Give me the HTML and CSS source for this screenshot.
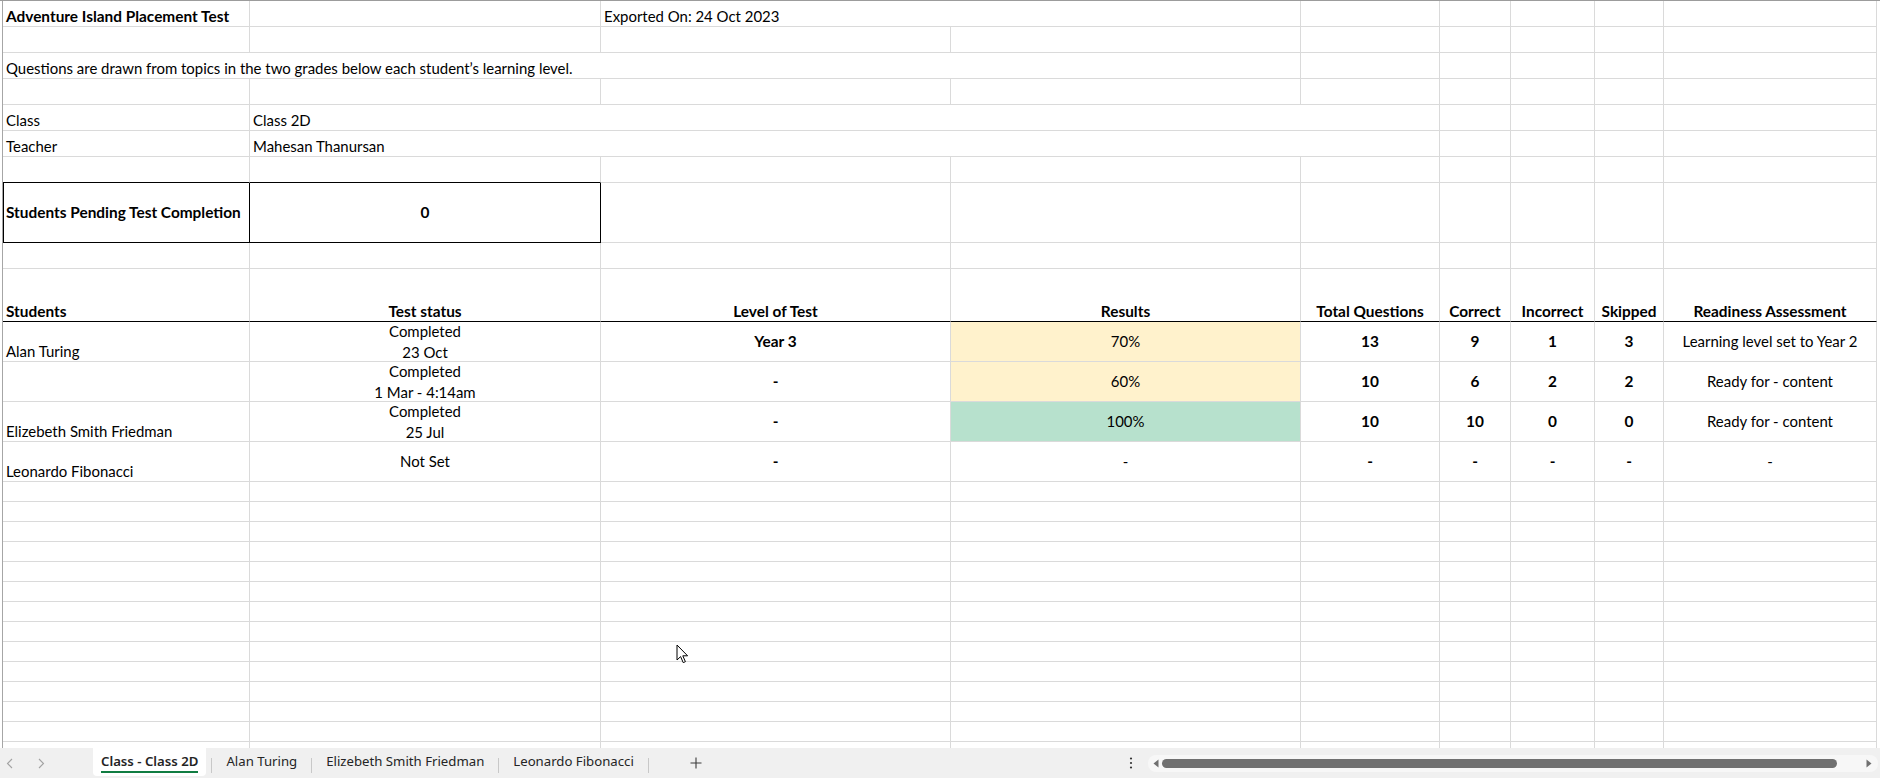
FILE: index.html
```html
<!DOCTYPE html>
<html lang="en">
<head>
<meta charset="utf-8">
<title>Class - Class 2D</title>
<link rel="stylesheet" href="styles.css">
</head>
<body>
<div class="app">
  <div class="sheet">
    <div class="grid">
      <!-- row 1 -->
      <div class="c b">Adventure Island Placement Test</div>
      <div class="c"></div>
      <div class="c s2">Exported On: 24 Oct 2023</div>
      <div class="c"></div><div class="c"></div><div class="c"></div><div class="c"></div><div class="c"></div>
      <!-- row 2 -->
      <div class="c"></div><div class="c"></div><div class="c"></div><div class="c"></div><div class="c"></div><div class="c"></div><div class="c"></div><div class="c"></div><div class="c"></div>
      <!-- row 3 -->
      <div class="c s4">Questions are drawn from topics in the two grades below each student’s learning level.</div>
      <div class="c"></div><div class="c"></div><div class="c"></div><div class="c"></div><div class="c"></div>
      <!-- row 4 -->
      <div class="c"></div><div class="c"></div><div class="c"></div><div class="c"></div><div class="c"></div><div class="c"></div><div class="c"></div><div class="c"></div><div class="c"></div>
      <!-- row 5 -->
      <div class="c">Class</div>
      <div class="c s4">Class 2D</div>
      <div class="c"></div><div class="c"></div><div class="c"></div><div class="c"></div>
      <!-- row 6 -->
      <div class="c">Teacher</div>
      <div class="c s4">Mahesan Thanursan</div>
      <div class="c"></div><div class="c"></div><div class="c"></div><div class="c"></div>
      <!-- row 7 -->
      <div class="c bk-b"></div><div class="c bk-b"></div><div class="c"></div><div class="c"></div><div class="c"></div><div class="c"></div><div class="c"></div><div class="c"></div><div class="c"></div>
      <!-- row 8 -->
      <div class="c b mid box-l">Students Pending Test Completion</div>
      <div class="c b mid ctr box-r">0</div>
      <div class="c"></div><div class="c"></div><div class="c"></div><div class="c"></div><div class="c"></div><div class="c"></div><div class="c"></div>
      <!-- row 9 -->
      <div class="c"></div><div class="c"></div><div class="c"></div><div class="c"></div><div class="c"></div><div class="c"></div><div class="c"></div><div class="c"></div><div class="c"></div>
      <!-- row 10: header -->
      <div class="c b hd">Students</div>
      <div class="c b hd ctr">Test status</div>
      <div class="c b hd ctr">Level of Test</div>
      <div class="c b hd ctr">Results</div>
      <div class="c b hd ctr">Total Questions</div>
      <div class="c b hd ctr">Correct</div>
      <div class="c b hd ctr">Incorrect</div>
      <div class="c b hd ctr">Skipped</div>
      <div class="c b hd ctr">Readiness Assessment</div>
      <!-- row 11 -->
      <div class="c">Alan Turing</div>
      <div class="c wrap"><span>Completed</span><span>23 Oct</span></div>
      <div class="c b mid ctr">Year 3</div>
      <div class="c mid ctr fill-y">70%</div>
      <div class="c b mid ctr">13</div>
      <div class="c b mid ctr">9</div>
      <div class="c b mid ctr">1</div>
      <div class="c b mid ctr">3</div>
      <div class="c mid ctr">Learning level set to Year 2</div>
      <!-- row 12 -->
      <div class="c"></div>
      <div class="c wrap"><span>Completed</span><span>1 Mar - 4:14am</span></div>
      <div class="c b mid ctr">-</div>
      <div class="c mid ctr fill-y">60%</div>
      <div class="c b mid ctr">10</div>
      <div class="c b mid ctr">6</div>
      <div class="c b mid ctr">2</div>
      <div class="c b mid ctr">2</div>
      <div class="c mid ctr">Ready for - content</div>
      <!-- row 13 -->
      <div class="c">Elizebeth Smith Friedman</div>
      <div class="c wrap"><span>Completed</span><span>25 Jul</span></div>
      <div class="c b mid ctr">-</div>
      <div class="c mid ctr fill-g">100%</div>
      <div class="c b mid ctr">10</div>
      <div class="c b mid ctr">10</div>
      <div class="c b mid ctr">0</div>
      <div class="c b mid ctr">0</div>
      <div class="c mid ctr">Ready for - content</div>
      <!-- row 14 -->
      <div class="c">Leonardo Fibonacci</div>
      <div class="c wrap"><span>Not Set</span></div>
      <div class="c b mid ctr">-</div>
      <div class="c mid ctr">-</div>
      <div class="c b mid ctr">-</div>
      <div class="c b mid ctr">-</div>
      <div class="c b mid ctr">-</div>
      <div class="c b mid ctr">-</div>
      <div class="c mid ctr">-</div>
      <!-- empty rows -->
      <div class="c empty"></div><div class="c empty"></div><div class="c empty"></div><div class="c empty"></div><div class="c empty"></div><div class="c empty"></div><div class="c empty"></div><div class="c empty"></div><div class="c empty"></div>
    </div>
  </div>

  <div class="tabbar">
    <div class="nav">
      <svg class="chev" width="7" height="11" viewBox="0 0 7 11"><path d="M6 1 L1.5 5.5 L6 10" fill="none" stroke="#a3a3a3" stroke-width="1.1"/></svg>
      <svg class="chev" width="7" height="11" viewBox="0 0 7 11"><path d="M1 1 L5.5 5.5 L1 10" fill="none" stroke="#a3a3a3" stroke-width="1.1"/></svg>
    </div>
    <div class="tab active"><span>Class - Class 2D</span></div>
    <i class="sep first"></i>
    <div class="tab"><span>Alan Turing</span></div>
    <i class="sep"></i>
    <div class="tab"><span>Elizebeth Smith Friedman</span></div>
    <i class="sep"></i>
    <div class="tab"><span>Leonardo Fibonacci</span></div>
    <i class="sep"></i>
    <div class="add">
      <svg width="12" height="12" viewBox="0 0 12 12"><path d="M6 0.5 V11.5 M0.5 6 H11.5" stroke="#3b3b3b" stroke-width="1.1" fill="none"/></svg>
    </div>
    <div class="right">
      <svg class="more" width="4" height="12" viewBox="0 0 4 12"><circle cx="2" cy="1.5" r="1.1" fill="#333"/><circle cx="2" cy="6" r="1.1" fill="#333"/><circle cx="2" cy="10.5" r="1.1" fill="#333"/></svg>
      <div class="track">
        <svg class="arr" width="6" height="9" viewBox="0 0 6 9"><path d="M5.5 0.5 L0.5 4.5 L5.5 8.5 Z" fill="#707070"/></svg>
        <div class="thumb"></div>
        <svg class="arr r" width="6" height="9" viewBox="0 0 6 9"><path d="M0.5 0.5 L5.5 4.5 L0.5 8.5 Z" fill="#707070"/></svg>
      </div>
    </div>
  </div>

  <svg class="cursor" width="13" height="20" viewBox="0 0 13 20"><path d="M1 1 L1 16 L4.6 12.6 L7.2 18.6 L9.4 17.7 L6.8 11.8 L11.6 11.8 Z" fill="#fff" stroke="#000" stroke-width="1" stroke-linejoin="round"/></svg>
</div>
</body>
</html>
```

FILE: styles.css
```css
* { box-sizing: border-box; }
html, body { margin: 0; padding: 0; }
body {
  width: 1880px;
  height: 778px;
  overflow: hidden;
  background: #fff;
  color: #000;
  font-family: "Lato", "Liberation Sans", sans-serif;
  font-size: 14.95px;
}
.app {
  position: relative;
  display: flex;
  flex-direction: column;
  height: 778px;
}
.sheet {
  height: 748px;
  overflow: hidden;
  border-top: 1px solid #9c9c9c;
  padding-left: 2px;
}
.grid {
  display: grid;
  grid-template-columns: 247px 351px 350px 350px 139px 71px 84px 69px 213px;
  grid-template-rows: repeat(7, 26px) 60px 26px 53px repeat(4, 40px) 266px;
  width: 1875px;
  border-left: 1px solid #a6a6a6;
}
.c {
  display: flex;
  align-items: flex-end;
  min-width: 0;
  padding: 0 3px 1px;
  border-right: 1px solid #dadada;
  border-bottom: 1px solid #dadada;
  white-space: nowrap;
  line-height: 17px;
}
.s2 { grid-column: span 2; }
.s4 { grid-column: span 4; }
.b { font-weight: 700; font-size: 15.4px; }
.ctr { justify-content: center; }
.mid { align-items: center; padding-bottom: 0; }
.hd { border-bottom-color: #000; }
.bk-b { border-bottom-color: #000; }
.box-l {
  border-right-color: #000;
  border-bottom-color: #000;
  box-shadow: inset 1px 0 0 #000;
}
.box-r {
  border-right-color: #000;
  border-bottom-color: #000;
}
.wrap {
  flex-direction: column;
  justify-content: center;
  align-items: center;
  padding-bottom: 0;
  line-height: 21px;
}
.fill-y { background: #fff2cc; }
.fill-g { background: #b7e1cd; }
.empty {
  border-bottom: none;
  background: repeating-linear-gradient(to bottom, transparent 0, transparent 19px, #dadada 19px, #dadada 20px);
}

/* sheet tab bar */
.tabbar {
  display: flex;
  height: 30px;
  background: #f0f0f0;
  font-family: "Noto Sans", "Open Sans", sans-serif;
  font-size: 13.2px;
  color: #242424;
}
.nav {
  width: 93px;
  display: flex;
  align-items: center;
}
.chev { margin-left: 6px; }
.chev + .chev { margin-left: 25px; }
.tab {
  padding: 4px 14px 0;
  line-height: 18px;
  white-space: nowrap;
}
.tab.active {
  height: 28px;
  padding: 4px 8px 0;
  background: #fff;
  border-radius: 0 0 4px 4px;
  font-weight: 600;
}
.tab.active span {
  display: block;
  padding-bottom: 1px;
  border-bottom: 2px solid #107c41;
}
.sep {
  width: 1px;
  height: 15px;
  margin-top: 10px;
  background: #c8c8c8;
}
.sep.first { margin-left: 5px; }
.add {
  display: flex;
  align-items: center;
  margin-left: 41px;
}
.right {
  margin-left: auto;
  display: flex;
  align-items: center;
}
.more { margin-right: 15px; }
.track {
  width: 730px;
  height: 17px;
  margin-right: 2px;
  display: flex;
  align-items: center;
  padding: 0 6px 0 5px;
  background: #f7f7f7;
  border-radius: 8px;
}
.thumb {
  flex: 1;
  height: 9px;
  margin: 0 29px 0 3px;
  background: #707070;
  border-radius: 5px;
}
.cursor {
  position: absolute;
  left: 676px;
  top: 644px;
}
```
